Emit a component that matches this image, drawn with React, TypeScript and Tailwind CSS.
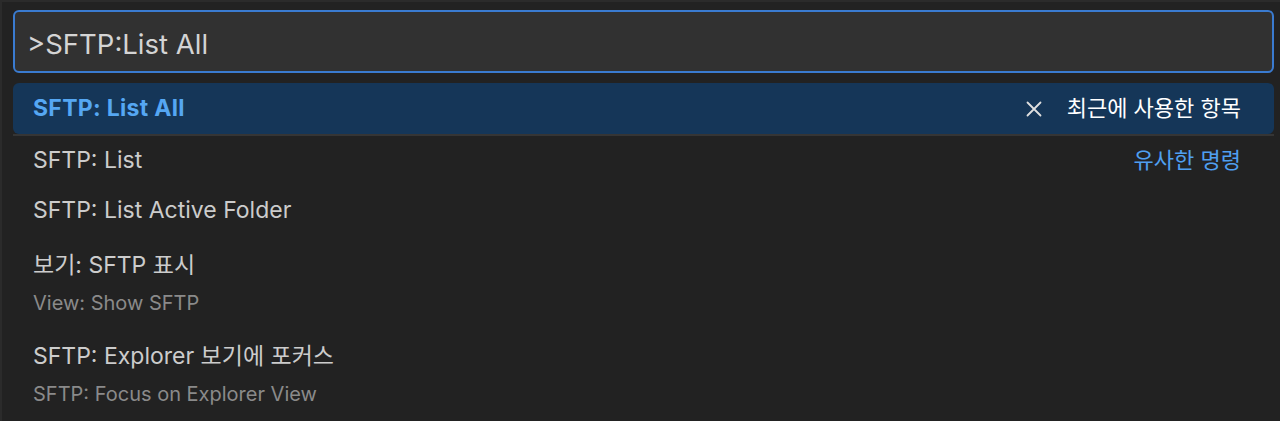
import { type ReactNode } from "react";

const font = { fontFamily: "Inter, 'Noto Sans CJK KR', sans-serif" };

function CloseIcon() {
  return (
    <svg width="16" height="16" viewBox="0 0 16 16" className="text-[#e0e0e0]">
      <path d="M1.5 1.5 L14.5 14.5 M14.5 1.5 L1.5 14.5" stroke="currentColor" strokeWidth="1.8" strokeLinecap="round" />
    </svg>
  );
}

function SingleRow({ label, right, separator }: { label: string; right?: ReactNode; separator?: boolean }) {
  return (
    <div
      className={`flex h-[51px] items-center justify-between pl-5 pr-[33px] ${
        separator ? "border-t-2 border-[#353535]" : ""
      }`}
    >
      <span className="text-[23px] text-[#cccccc]">{label}</span>
      {right}
    </div>
  );
}

function DoubleRow({ label, description }: { label: string; description: string }) {
  return (
    <div className="flex h-[91px] flex-col pl-5 pt-[14px]">
      <span className="text-[23px] leading-[30px] text-[#cccccc]">{label}</span>
      <span className="mt-2 text-[20px] leading-[30px] text-[#8a8a8a]">{description}</span>
    </div>
  );
}

export default function App() {
  return (
    <div
      style={font}
      className="h-[421px] w-full overflow-hidden border-l-2 border-t-2 border-[#2b2b2b] bg-[#222222] pl-[11px] pr-[6px] pt-2"
    >
      <div className="flex h-[63px] items-center rounded-[6px] border-2 border-[#3a7bd0] bg-[#313131] pl-3 pt-[6px]">
        <span className="text-[27.5px] text-[#d4d4d4]">&gt;SFTP:List All</span>
      </div>

      <div className="mt-[10px] flex flex-col">
        <div className="flex h-[51px] items-center justify-between rounded-[6px] bg-[#153658] pl-5 pr-[33px]">
          <span className="text-[23px] font-bold tracking-[0.3px] text-[#55a7f3]">SFTP: List All</span>
          <div className="flex items-center gap-[25px]">
            <CloseIcon />
            <span className="text-[22px] text-white">최근에 사용한 항목</span>
          </div>
        </div>
        <SingleRow
          label="SFTP: List"
          separator
          right={<span className="text-[22px] text-[#4f9ff0]">유사한 명령</span>}
        />
        <SingleRow label="SFTP: List Active Folder" />
        <DoubleRow label="보기: SFTP 표시" description="View: Show SFTP" />
        <DoubleRow label="SFTP: Explorer 보기에 포커스" description="SFTP: Focus on Explorer View" />
      </div>
    </div>
  );
}
